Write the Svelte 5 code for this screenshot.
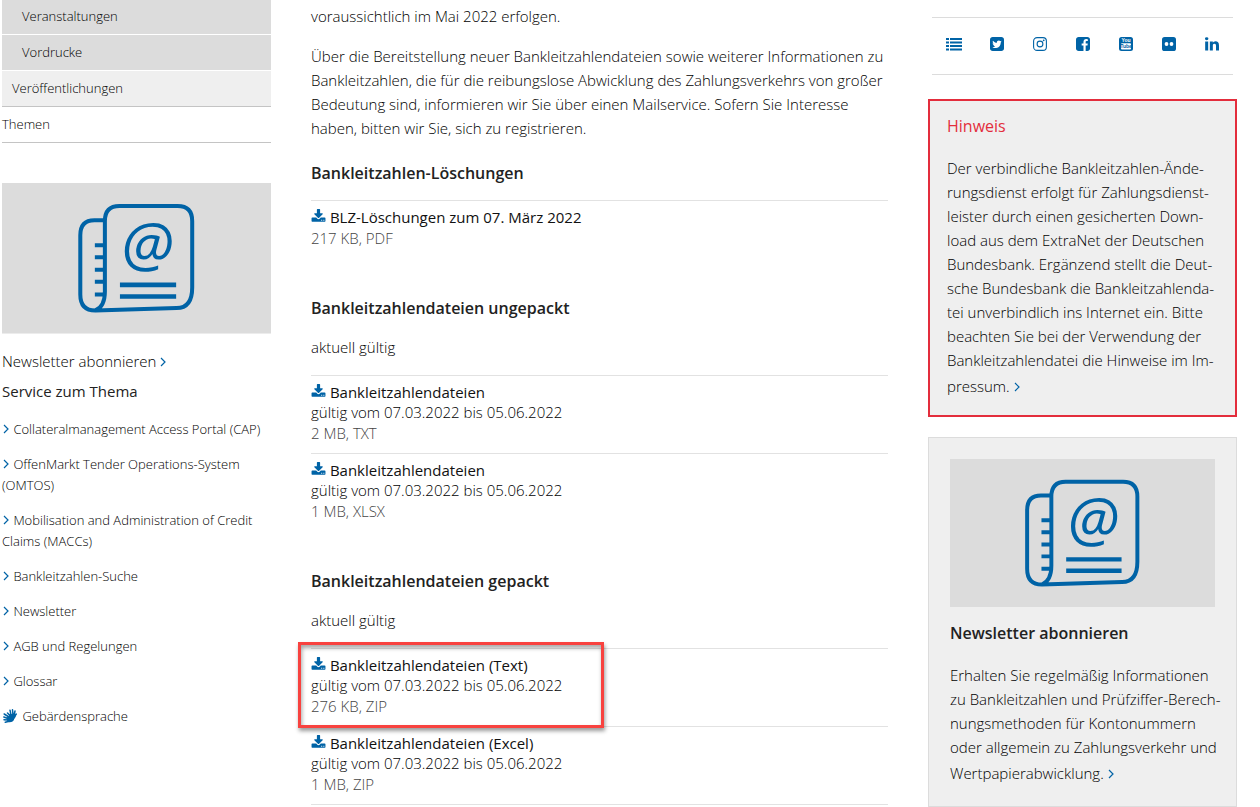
<script lang="ts">
  type Download = { title: string; valid?: string; meta: string; marked?: boolean };
  type Section = { heading: string; note?: string; items: Download[] };

  const nav = [
    { label: 'Veranstaltungen', level: 'sub' },
    { label: 'Vordrucke', level: 'sub' },
    { label: 'Veröffentlichungen', level: 'mid' },
    { label: 'Themen', level: 'top' }
  ];

  const services = [
    'Collateralmanagement Access Portal (CAP)',
    'OffenMarkt Tender Operations-System (OMTOS)',
    'Mobilisation and Administration of Credit Claims (MACCs)',
    'Bankleitzahlen-Suche',
    'Newsletter',
    'AGB und Regelungen',
    'Glossar'
  ];

  const valid = 'gültig vom 07.03.2022 bis 05.06.2022';

  const sections: Section[] = [
    {
      heading: 'Bankleitzahlen-Löschungen',
      items: [{ title: 'BLZ-Löschungen zum 07. März 2022', meta: '217 KB, PDF' }]
    },
    {
      heading: 'Bankleitzahlendateien ungepackt',
      note: 'aktuell gültig',
      items: [
        { title: 'Bankleitzahlendateien', valid, meta: '2 MB, TXT' },
        { title: 'Bankleitzahlendateien', valid, meta: '1 MB, XLSX' }
      ]
    },
    {
      heading: 'Bankleitzahlendateien gepackt',
      note: 'aktuell gültig',
      items: [
        { title: 'Bankleitzahlendateien (Text)', valid, meta: '276 KB, ZIP', marked: true },
        { title: 'Bankleitzahlendateien (Excel)', valid, meta: '1 MB, ZIP' }
      ]
    }
  ];

  const social = ['Übersicht', 'Twitter', 'Instagram', 'Facebook', 'YouTube', 'Flickr', 'LinkedIn'];
</script>

{#snippet chevron()}
  <svg class="chevron" viewBox="0 0 6 10" aria-hidden="true"><path d="M1 1l4 4-4 4" /></svg>
{/snippet}

{#snippet newsletterImage()}
  <svg class="picture" viewBox="0 0 268 150" role="img" aria-label="Newsletter">
    <rect width="268" height="150" fill="#dcdcdc" />
    <g fill="none" stroke="#0063a6" stroke-width="4">
      <path d="M93 127Q102.500 123 102.500 108V38Q102.500 23 117 23H175Q189.500 23 189.500 38V104Q189.500 124.500 174 124.500L93 127Q78 127 78 111V52Q78 37 92 37H102" />
      <path d="M92.500 62h9M92.500 74h9M92.500 86.500h9M92.500 98.500h9M92.500 111h9" />
      <path d="M117.500 101.500h56M117.500 113h56" stroke-width="4.500" />
    </g>
    <text x="145" y="83" text-anchor="middle">@</text>
  </svg>
{/snippet}

<div class="page">
  <aside class="left">
    <nav>
      {#each nav as item}
        <a class={item.level} href="#top">{item.label}</a>
      {/each}
    </nav>

    {@render newsletterImage()}
    <a class="subscribe" href="#newsletter">Newsletter abonnieren {@render chevron()}</a>

    <h3>Service zum Thema</h3>
    <ul>
      {#each services as service}
        <li><a href="#service">{@render chevron()} {service}</a></li>
      {/each}
      <li>
        <a href="#service">
          <svg class="hands" viewBox="0 0 14 14" aria-hidden="true">
            <path d="M8 6L7 1.200M10 6L9.500 .800M11 6.500L12 2M11.500 7.500L13.300 5M7.500 7L4.500 4" fill="none" stroke="#0063a6" stroke-width="1.500" stroke-linecap="round" />
            <path d="M6.500 5.500L11 4.500L13 6Q12.500 10 9.500 11L6 8z" fill="#0063a6" />
            <path d="M6 8L1.200 5M5 9.500L.800 8M5 11L1 10.800M6 12.300L2.300 13.200M8 8.500L6.500 5.800" fill="none" stroke="#0063a6" stroke-width="1.500" stroke-linecap="round" />
            <path d="M4.500 7.500L8.500 7.500Q11.500 9 11 11Q9 14 5 13L3.500 10z" fill="#0063a6" />
          </svg>
          Gebärdensprache
        </a>
      </li>
    </ul>
  </aside>

  <main>
    <p>voraussichtlich im Mai 2022 erfolgen.</p>
    <p>
      Über die Bereitstellung neuer Bankleitzahlendateien sowie weiterer Informationen zu<br />
      Bankleitzahlen, die für die reibungslose Abwicklung des Zahlungsverkehrs von großer<br />
      Bedeutung sind, informieren wir Sie über einen Mailservice. Sofern Sie Interesse<br />
      haben, bitten wir Sie, sich zu registrieren.
    </p>

    {#each sections as section}
      <section>
        <h2>{section.heading}</h2>
        {#if section.note}
          <p>{section.note}</p>
        {/if}
        <ul>
          {#each section.items as item}
            <li class:marked={item.marked}>
              <a href="#download">
                <svg class="download" viewBox="0 0 1792 1792" aria-hidden="true">
                  <path d="M1344 1344q0-26-19-45t-45-19-45 19-19 45 19 45 45 19 45-19 19-45zm256 0q0-26-19-45t-45-19-45 19-19 45 19 45 45 19 45-19 19-45zm128-224v320q0 40-28 68t-68 28h-1472q-40 0-68-28t-28-68v-320q0-40 28-68t68-28h465l135 136q58 56 136 56t136-56l136-136h464q40 0 68 28t28 68zm-325-569q17 41-14 70l-448 448q-18 19-45 19t-45-19l-448-448q-31-29-14-70 17-39 59-39h256v-448q0-26 19-45t45-19h256q26 0 45 19t19 45v448h256q42 0 59 39z" />
                </svg>
                {item.title}
              </a>
              {#if item.valid}
                <span>{item.valid}</span>
              {/if}
              <span class="meta">{item.meta}</span>
            </li>
          {/each}
        </ul>
      </section>
    {/each}
  </main>

  <aside class="right">
    <div class="social">
      {#each social as name}
        <a href="#social" aria-label={name}>
          {#if name === 'Übersicht'}
            <svg class="wide" viewBox="0 0 16 14"><path d="M0 1h3v2H0zM4 1h12v2H4zM0 4.500h3v2H0zM4 4.500h12v2H4zM0 8h3v2H0zM4 8h12v2H4zM0 11.500h3v2H0zM4 11.500h12v2H4z" /></svg>
          {:else if name === 'Twitter'}
            <svg viewBox="128 128 1536 1536"><path d="M1408 610q-56 25-121 34 68-40 93-117-65 38-134 51-61-66-153-66-87 0-148.500 61.500t-61.500 148.500q0 29 5 48-129-7-242-65t-192-155q-29 50-29 106 0 114 91 175-47-1-100-26v1q0 75 50 133.500t123 72.500q-29 8-51 8-13 0-39-4 21 63 74.500 104t121.500 42q-116 90-261 90-26 0-50-3 148 94 322 94 112 0 210-35.500t168-95 120.500-137 75-162 24.500-168.500q0-18-1-27 63-45 105-109zm256-194v960q0 119-84.500 203.500t-203.500 84.500h-960q-119 0-203.500-84.500t-84.500-203.500v-960q0-119 84.500-203.500t203.500-84.500h960q119 0 203.500 84.500t84.500 203.500z" /></svg>
          {:else if name === 'Instagram'}
            <svg viewBox="0 0 14 14"><g fill="none" stroke="#0063a6" stroke-width="1.100"><rect x=".6" y=".6" width="12.800" height="12.800" rx="3.500" /><circle cx="7" cy="7" r="2.900" /></g><circle cx="10.700" cy="3.300" r=".9" /></svg>
          {:else if name === 'Facebook'}
            <svg viewBox="128 128 1536 1536"><path d="M1376 128q119 0 203.500 84.500t84.500 203.500v960q0 119-84.500 203.500t-203.500 84.500h-188v-595h199l30-232h-229v-148q0-56 23.500-84t91.500-28l122-1v-207q-63-9-178-9-136 0-217.500 80t-81.500 226v171h-200v232h200v595h-532q-119 0-203.500-84.500t-84.500-203.500v-960q0-119 84.500-203.500t203.500-84.500h960z" /></svg>
          {:else if name === 'YouTube'}
            <svg class="youtube" viewBox="0 0 14 14"><rect width="14" height="14" rx="2.500" /><rect x="2" y="6.300" width="10" height="6.200" rx="1" fill="#fff" /><text x="7" y="5.200" fill="#fff">You</text><text x="7" y="11.300">Tube</text></svg>
          {:else if name === 'Flickr'}
            <svg viewBox="0 0 14 14"><rect width="14" height="14" rx="2.600" /><circle cx="4.500" cy="7" r="1.900" fill="#fff" /><circle cx="9.500" cy="7" r="1.900" fill="#fff" /></svg>
          {:else}
            <svg viewBox="128 128 1536 1536"><path d="M477 625v991h-330v-991h330zm21-306q1 73-50.500 122t-135.500 49h-2q-82 0-132-49t-50-122q0-74 51.500-122.500t134.500-48.500 133 48.500 51 122.500zm1166 729v568h-329v-530q0-105-40.500-164.500t-126.500-59.500q-63 0-105.500 34.500t-63.500 85.500q-11 30-11 81v553h-329q2-399 2-647t-1-296l-1-48h329v144h-2q20-32 41-56t56.500-52 87-43.500 114.500-15.500q171 0 275 113.500t104 332.500z" /></svg>
          {/if}
        </a>
      {/each}
    </div>

    <section class="notice">
      <h2>Hinweis</h2>
      <p>
        Der verbindliche Bankleitzahlen-Ände-<br />rungsdienst erfolgt für Zahlungsdienst-<br />
        leister durch einen gesicherten Down-<br />load aus dem ExtraNet der Deutschen<br />
        Bundesbank. Ergänzend stellt die Deut-<br />sche Bundesbank die Bankleitzahlenda-<br />
        tei unverbindlich ins Internet ein. Bitte<br />beachten Sie bei der Verwendung der<br />
        Bankleitzahlendatei die Hinweise im Im-<br /><a href="#impressum">pressum. {@render chevron()}</a>
      </p>
    </section>

    <section class="card">
      {@render newsletterImage()}
      <h2>Newsletter abonnieren</h2>
      <p>
        Erhalten Sie regelmäßig Informationen<br />zu Bankleitzahlen und Prüfziffer-Berech-<br />
        nungsmethoden für Kontonummern<br />oder allgemein zu Zahlungsverkehr und<br />
        <a href="#newsletter">Wertpapierabwicklung. {@render chevron()}</a>
      </p>
    </section>
  </aside>
</div>

<style>
  :global(body) {
    margin: 0;
    background: #fff;
  }

  .page {
    display: grid;
    grid-template-columns: minmax(0, 269fr) minmax(0, 577fr) minmax(0, 309fr);
    gap: 40px;
    align-items: start;
    padding: 0 23px 0 2px;
    font: 300 15px/24px 'Open Sans', 'Noto Sans', sans-serif;
    color: #000;
  }

  a {
    color: inherit;
    text-decoration: none;
  }

  ul {
    list-style: none;
    margin: 0;
    padding: 0;
  }

  p {
    margin: 0;
  }

  h2,
  h3 {
    margin: 0;
    font-size: 16px;
    font-weight: 600;
    color: #222;
  }

  svg {
    fill: #0063a6;
  }

  .chevron {
    width: 6px;
    height: 10px;
    fill: none;
    stroke: #0063a6;
    stroke-width: 1.2;
  }

  .picture {
    display: block;
    width: 100%;
  }

  .picture text {
    font: italic 400 61px 'Open Sans', sans-serif;
  }

  /* left column */
  nav {
    margin: -1px 0 40px;
    font-size: 13px;
    line-height: 35px;
  }

  nav a {
    display: block;
    border-bottom: 1px solid #c4c4c4;
  }

  nav .sub {
    padding-left: 20px;
    background: #dcdcdc;
    border-color: #fff;
  }

  nav .mid {
    padding-left: 10px;
    background: #efefef;
  }

  .subscribe {
    display: block;
    margin-top: 15px;
  }

  h3 {
    margin: 6px 0 16px;
    font-size: 15px;
    font-weight: 400;
  }

  .left li {
    margin-bottom: 14px;
    font-size: 13px;
    line-height: 21px;
  }

  .left li .chevron {
    margin: 0 1px;
  }

  .hands {
    width: 14px;
    height: 14px;
    margin: 0 2px 0 1px;
    vertical-align: -2px;
  }

  /* main column */
  main {
    padding-top: 4px;
  }

  main > p {
    margin-bottom: 16px;
  }

  section h2 {
    margin-bottom: 15px;
  }

  main section {
    margin-bottom: 38px;
  }

  main > p + section {
    margin-top: 21px;
  }

  section p {
    margin-bottom: 16px;
  }

  main li {
    position: relative;
    display: flex;
    flex-direction: column;
    padding: 6px 0 9px;
    border-top: 1px solid #e2e2e2;
    line-height: 20px;
  }

  main section:last-child li:last-child {
    border-bottom: 1px solid #e2e2e2;
  }

  main li a {
    font-weight: 400;
    color: #111;
  }

  .download {
    width: 15px;
    height: 15px;
    vertical-align: -1px;
  }

  .meta {
    line-height: 22px;
    color: #444;
  }

  .marked::after {
    content: '';
    position: absolute;
    z-index: 1;
    top: -7px;
    left: -13px;
    width: 300px;
    height: 80px;
    border: 3px solid #f8423f;
    box-shadow: 1px 3px 4px rgba(0, 0, 0, 0.4), inset 1px 3px 4px rgba(0, 0, 0, 0.35);
  }

  /* right column */
  .social {
    display: flex;
    margin: 17px 4px 24px;
    padding: 16px 0 20px;
    border: solid #dcdcdc;
    border-width: 1px 0;
  }

  .social a {
    display: flex;
    flex: 1;
    justify-content: center;
    align-items: center;
    height: 20px;
  }

  .social svg {
    width: 14px;
    height: 14px;
  }

  .social .wide {
    width: 16px;
  }

  .youtube text {
    font: 700 5px 'Liberation Sans', sans-serif;
    text-anchor: middle;
  }

  .notice {
    padding: 13px 17px 0;
    border: 2px solid #e32d3c;
    background: #efefef;
  }

  .notice h2 {
    margin-bottom: 18px;
    font-weight: 400;
    color: #e32d3c;
  }

  .notice p {
    margin-bottom: 15px;
  }

  .card {
    margin-top: 20px;
    padding: 21px 21px 3px;
    border: 1px solid #dcdcdc;
    background: #efefef;
  }

  .card h2 {
    margin: 14px 0 18px;
  }

  .right p {
    white-space: nowrap;
  }

  .right p a {
    line-height: 28px;
  }
</style>
